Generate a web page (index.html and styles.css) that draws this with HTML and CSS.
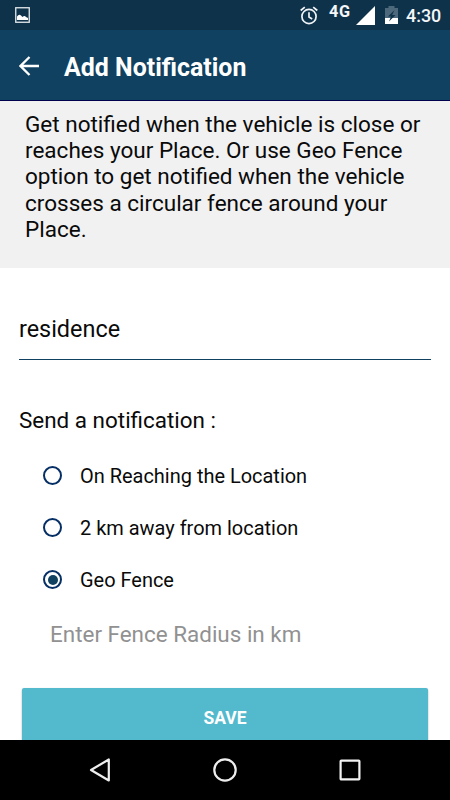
FILE: index.html
```html
<!DOCTYPE html>
<html lang="en">
<head>
<meta charset="utf-8">
<title>Add Notification</title>
<link rel="stylesheet" href="styles.css">
</head>
<body>
<div class="screen">
  <div class="status">
    <svg class="picture" width="15" height="16" viewBox="0 0 15 16"><rect x=".75" y=".75" width="13.5" height="14.5" fill="none" stroke="#e4e9ed" stroke-width="1.3"/><path d="M2 13V9.500Q4 6.500 6 8.500L7.500 10Q9.500 8 11 10L13 11V13Z" fill="#fff"/></svg>
    <svg class="alarm" width="18" height="19" viewBox="0 0 18 19"><g fill="none" stroke="#f1f4f6" stroke-width="1.700"><circle cx="9" cy="10.500" r="7.100"/><path d="M.7 4.500 4.800 1.100M17.300 4.500 13.200 1.100M9 6.300v4.700l3.200 2"/></g></svg>
    <span class="network">4G</span>
    <svg class="signal" width="19" height="19" viewBox="0 0 19 19"><path d="M0 19 19 0V19Z" fill="#fff"/></svg>
    <svg class="battery" width="13" height="18" viewBox="0 0 13 18"><path d="M0 2H3.500V0H9.500V2H13V18H0Z" fill="#4d687b"/><path d="M0 12H13V18H0Z" fill="#fff"/><path d="M9.500 4 3 10.500H6L4 15.500 10.500 9H7.200Z" fill="#0f324b"/></svg>
    <span class="clock">4:30</span>
  </div>
  <header class="appbar">
    <svg width="21" height="20" viewBox="0 0 21 20"><path d="M20 10H2M10.500 1 1.500 10l9 9" fill="none" stroke="#fff" stroke-width="2.300"/></svg>
    <h1>Add Notification</h1>
  </header>
  <main class="content">
    <p class="intro">Get notified when the vehicle is close or<br>reaches your Place. Or use Geo Fence<br>option to get notified when the vehicle<br>crosses a circular fence around your<br>Place.</p>
    <div class="place">residence</div>
    <h2>Send a notification :</h2>
    <div class="options">
      <div class="option"><span class="radio"></span><span>On Reaching the Location</span></div>
      <div class="option"><span class="radio"></span><span>2 km away from location</span></div>
      <div class="option"><span class="radio checked"></span><span>Geo Fence</span></div>
    </div>
    <div class="radius">Enter Fence Radius in km</div>
    <div class="save">SAVE</div>
  </main>
  <nav class="navbar">
    <svg width="24" height="26" viewBox="0 0 24 26"><path d="M3 13 20.800 2.500V23.500Z" fill="none" stroke="#eee" stroke-width="2.200" stroke-linejoin="round"/></svg>
    <svg width="24" height="26" viewBox="0 0 24 26"><circle cx="12" cy="13" r="10.700" fill="none" stroke="#eee" stroke-width="2.200"/></svg>
    <svg width="24" height="26" viewBox="0 0 24 26"><rect x="2.600" y="3.600" width="18.800" height="18.800" rx=".7" fill="none" stroke="#f2f2f2" stroke-width="2.200"/></svg>
  </nav>
</div>
</body>
</html>
```

FILE: styles.css
```css
* { box-sizing: border-box; }
body { margin: 0; font-family: Roboto, "Liberation Sans", sans-serif; color: #0a0a0a; }
svg { display: block; flex: none; }
.screen { width: 450px; height: 800px; display: flex; flex-direction: column; overflow: hidden; background: #fff; white-space: nowrap; }
.status { height: 30px; flex: none; display: flex; align-items: flex-start; background: #0f324b; color: #f4f6f8; padding-left: 15px; }
.picture { margin-top: 7px; }
.alarm { margin: 6px 0 0 270px; }
.network { margin-left: 11px; width: 27px; font-size: 16.300px; line-height: 23px; font-weight: 700; letter-spacing: .6px; }
.signal { margin-top: 6px; }
.battery { margin: 6px 0 0 10px; }
.clock { margin-left: 8px; font-size: 17.900px; line-height: 32px; font-weight: 500; }
.appbar { height: 71px; flex: none; display: flex; align-items: center; padding: 2px 0 0 19px; background: #114160; border-bottom: 1px solid #00004f; color: #fff; }
.appbar svg { margin-top: -1px; }
.appbar h1 { margin: 4px 0 0 24px; font-size: 24.950px; line-height: 30px; font-weight: 700; }
.content { flex: 1; min-height: 0; overflow: hidden; }
.intro { height: 167px; margin: 0; padding: 10px 25px 0; background: #f1f1f1; font-size: 22.52px; line-height: 26.200px; }
.place { height: 92px; margin: 0 19px; padding-top: 48px; border-bottom: 1px solid #114160; font-size: 23.4px; line-height: 27px; }
h2 { margin: 47px 19px 0; font-size: 22.45px; line-height: 27px; font-weight: 400; }
.options { margin-top: 16px; padding-left: 43px; }
.option { height: 52px; display: flex; align-items: center; gap: 18px; font-size: 19.97px; line-height: 24px; }
.radio { width: 19px; height: 19px; flex: none; margin-top: -1px; border: 2px solid #062f66; border-radius: 50%; display: flex; align-items: center; justify-content: center; }
.radio.checked::after { content: ""; width: 10px; height: 10px; border-radius: 50%; background: #114160; }
.radius { margin: 15px 0 0 50px; font-size: 22.45px; line-height: 27px; color: #919191; }
.save { height: 60px; margin: 40px 22px 0; border-radius: 2px; background: #53b9cd; color: #fff; box-shadow: 0 1px 2px rgba(0,0,0,.35); font-size: 17.5px; line-height: 60px; font-weight: 700; text-align: center; }
.navbar { height: 60px; flex: none; display: flex; align-items: center; justify-content: center; gap: 101px; background: #000; }
```
